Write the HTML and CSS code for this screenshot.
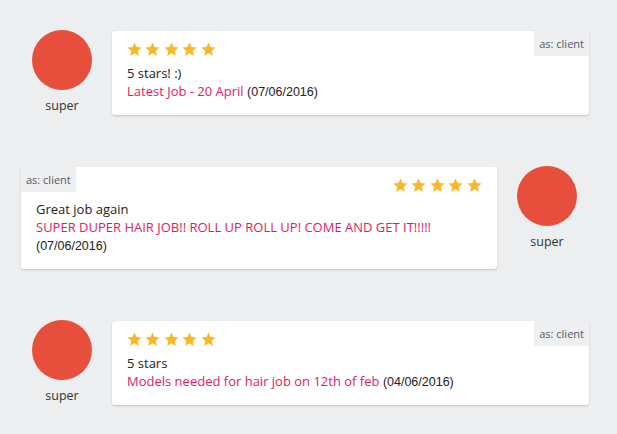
FILE: index.html
```html
<!DOCTYPE html>
<html>
<head>
<meta charset="utf-8">
<link rel="stylesheet" href="styles.css">
</head>
<body>
<svg width="0" height="0" class="defs">
  <defs>
    <symbol id="star" viewBox="0 0 24 24"><path d="M12 17.27L18.18 21l-1.64-7.03L22 9.24l-7.19-.61L12 2 9.19 8.63 2 9.24l5.46 4.73L5.82 21z"/></symbol>
  </defs>
</svg>
<div class="list">
  <div class="row row-left">
    <div class="user">
      <div class="avatar"></div>
      <div class="name">super</div>
    </div>
    <div class="card">
      <div class="badge badge-right">as: client</div>
      <div class="stars">
        <svg class="star"><use href="#star"/></svg><svg class="star"><use href="#star"/></svg><svg class="star"><use href="#star"/></svg><svg class="star"><use href="#star"/></svg><svg class="star"><use href="#star"/></svg>
      </div>
      <div class="text">5 stars! :)</div>
      <div class="text"><span class="job">Latest Job - 20 April</span> <span class="date">(07/06/2016)</span></div>
    </div>
  </div>

  <div class="row row-right">
    <div class="card">
      <div class="badge badge-left">as: client</div>
      <div class="stars stars-right">
        <svg class="star"><use href="#star"/></svg><svg class="star"><use href="#star"/></svg><svg class="star"><use href="#star"/></svg><svg class="star"><use href="#star"/></svg><svg class="star"><use href="#star"/></svg>
      </div>
      <div class="text">Great job again</div>
      <div class="text"><span class="job">SUPER DUPER HAIR JOB!! ROLL UP ROLL UP! COME AND GET IT!!!!!</span> <span class="date">(07/06/2016)</span></div>
    </div>
    <div class="user">
      <div class="avatar"></div>
      <div class="name">super</div>
    </div>
  </div>

  <div class="row row-left">
    <div class="user">
      <div class="avatar"></div>
      <div class="name">super</div>
    </div>
    <div class="card">
      <div class="badge badge-right">as: client</div>
      <div class="stars">
        <svg class="star"><use href="#star"/></svg><svg class="star"><use href="#star"/></svg><svg class="star"><use href="#star"/></svg><svg class="star"><use href="#star"/></svg><svg class="star"><use href="#star"/></svg>
      </div>
      <div class="text">5 stars</div>
      <div class="text"><span class="job">Models needed for hair job on 12th of feb</span> <span class="date">(04/06/2016)</span></div>
    </div>
  </div>
</div>
</body>
</html>
```

FILE: styles.css
```css
html, body {
  margin: 0;
  padding: 0;
  background: #edeef0;
}
body {
  font-family: "Open Sans", "Liberation Sans", sans-serif;
  color: #222;
  width: 617px;
  height: 434px;
  overflow: hidden;
}
.defs {
  position: absolute;
  width: 0;
  height: 0;
}
.list {
  padding-top: 30px;
  display: flex;
  flex-direction: column;
  gap: 51px;
}
.row {
  display: flex;
  align-items: flex-start;
  gap: 20px;
}
.row-left {
  padding-left: 32px;
}
.row-right {
  padding-left: 21px;
}
.user {
  width: 60px;
  display: flex;
  flex-direction: column;
  align-items: center;
}
.avatar {
  width: 60px;
  height: 60px;
  border-radius: 50%;
  background: #e84e3c;
}
.name {
  margin-top: 7px;
  font-size: 12.5px;
  line-height: 18px;
  color: #333;
}
.card {
  position: relative;
  margin-top: 1px;
  width: 477px;
  box-sizing: border-box;
  background: #fff;
  border-radius: 3px;
  box-shadow: 0 1px 2px rgba(0, 0, 0, 0.18);
  padding: 10px 16px 15px 15px;
}
.row-right .card {
  width: 476px;
  padding-top: 10px;
}
.badge {
  position: absolute;
  top: 0;
  height: 25px;
  line-height: 25px;
  padding: 0 5px;
  font-size: 11px;
  color: #555866;
  background: #eeeff1;
}
.badge-right {
  right: 0;
  border-top-right-radius: 3px;
}
.badge-left {
  left: 0;
  border-top-left-radius: 3px;
}
.stars {
  display: flex;
  gap: 1.5px;
  height: 17px;
  margin-left: -1.5px;
  margin-bottom: 6px;
}
.stars-right {
  justify-content: flex-end;
  margin-left: 0;
  margin-right: -1.5px;
}
.star {
  width: 17px;
  height: 17px;
  fill: #fbb826;
}
.text {
  font-size: 13px;
  line-height: 18px;
}
.job {
  color: #e5195e;
}
.date {
  font-family: "Liberation Sans", Arial, sans-serif;
  font-size: 12.5px;
  line-height: 1;
  color: #222;
}
```
